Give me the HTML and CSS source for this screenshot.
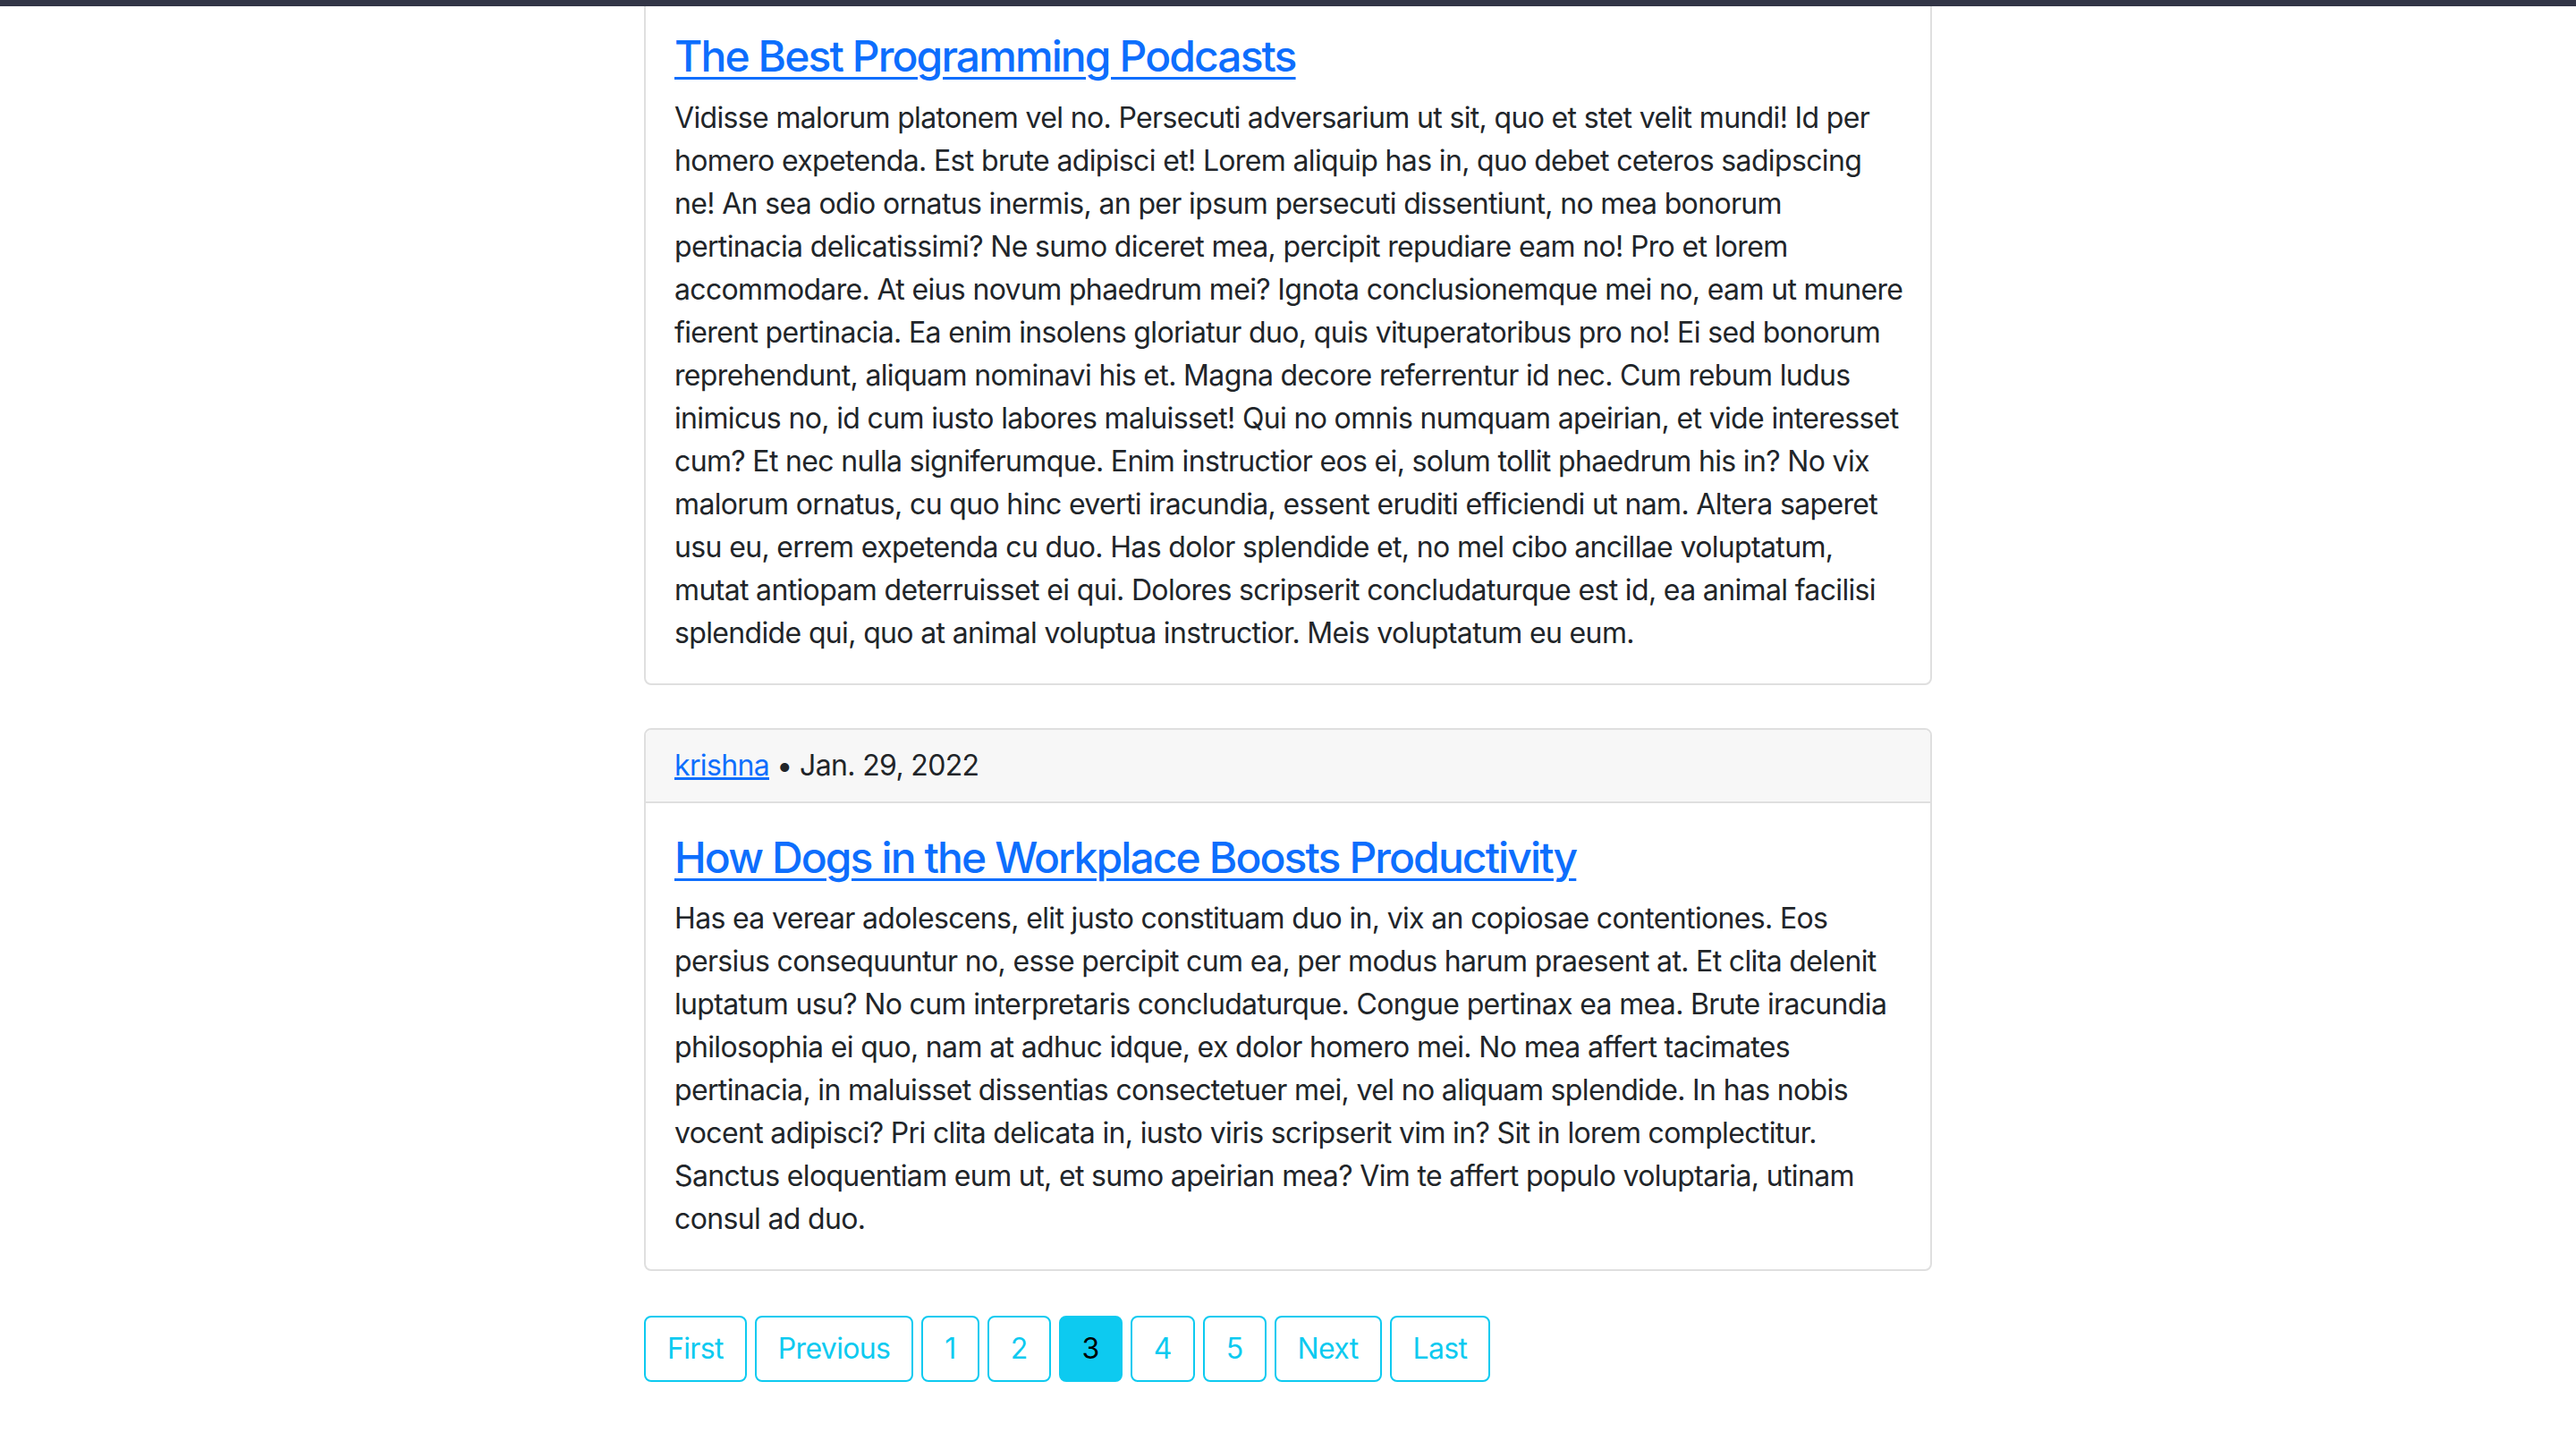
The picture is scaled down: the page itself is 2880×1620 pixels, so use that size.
FILE: index.html
```html
<!DOCTYPE html>
<html lang="en">
<head>
<meta charset="utf-8">
<title>Blog</title>
<link rel="stylesheet" href="styles.css">
</head>
<body>
<div class="topbar"></div>
<main class="container">
  <article class="card">
    <div class="card-body">
      <h2 class="card-title"><a href="#">The Best Programming Podcasts</a></h2>
      <p class="card-text">Vidisse malorum platonem vel no. Persecuti adversarium ut sit, quo et stet velit mundi! Id per<br>homero expetenda. Est brute adipisci et! Lorem aliquip has in, quo debet ceteros sadipscing<br>ne! An sea odio ornatus inermis, an per ipsum persecuti dissentiunt, no mea bonorum<br>pertinacia delicatissimi? Ne sumo diceret mea, percipit repudiare eam no! Pro et lorem<br>accommodare. At eius novum phaedrum mei? Ignota conclusionemque mei no, eam ut munere<br>fierent pertinacia. Ea enim insolens gloriatur duo, quis vituperatoribus pro no! Ei sed bonorum<br>reprehendunt, aliquam nominavi his et. Magna decore referrentur id nec. Cum rebum ludus<br>inimicus no, id cum iusto labores maluisset! Qui no omnis numquam apeirian, et vide interesset<br>cum? Et nec nulla signiferumque. Enim instructior eos ei, solum tollit phaedrum his in? No vix<br>malorum ornatus, cu quo hinc everti iracundia, essent eruditi efficiendi ut nam. Altera saperet<br>usu eu, errem expetenda cu duo. Has dolor splendide et, no mel cibo ancillae voluptatum,<br>mutat antiopam deterruisset ei qui. Dolores scripserit concludaturque est id, ea animal facilisi<br>splendide qui, quo at animal voluptua instructior. Meis voluptatum eu eum.</p>
    </div>
  </article>
  <article class="card">
    <div class="card-header"><a href="#">krishna</a> &bull; Jan. 29, 2022</div>
    <div class="card-body">
      <h2 class="card-title"><a href="#">How Dogs in the Workplace Boosts Productivity</a></h2>
      <p class="card-text">Has ea verear adolescens, elit justo constituam duo in, vix an copiosae contentiones. Eos<br>persius consequuntur no, esse percipit cum ea, per modus harum praesent at. Et clita delenit<br>luptatum usu? No cum interpretaris concludaturque. Congue pertinax ea mea. Brute iracundia<br>philosophia ei quo, nam at adhuc idque, ex dolor homero mei. No mea affert tacimates<br>pertinacia, in maluisset dissentias consectetuer mei, vel no aliquam splendide. In has nobis<br>vocent adipisci? Pri clita delicata in, iusto viris scripserit vim in? Sit in lorem complectitur.<br>Sanctus eloquentiam eum ut, et sumo apeirian mea? Vim te affert populo voluptaria, utinam<br>consul ad duo.</p>
    </div>
  </article>
  <nav class="pager">
    <a class="page" href="#">First</a>
    <a class="page" href="#">Previous</a>
    <a class="page" href="#">1</a>
    <a class="page" href="#">2</a>
    <a class="page active" href="#">3</a>
    <a class="page" href="#">4</a>
    <a class="page" href="#">5</a>
    <a class="page" href="#">Next</a>
    <a class="page" href="#">Last</a>
  </nav>
</main>
</body>
</html>
```
FILE: styles.css
```css
html, body {
  margin: 0;
  padding: 0;
  background: #ffffff;
}
body {
  font-family: Inter, "Liberation Sans", sans-serif;
  font-size: 32px;
  line-height: 48px;
  color: #212529;
  letter-spacing: -0.65px;
}
.topbar {
  position: fixed;
  top: 0;
  left: 0;
  right: 0;
  height: 7px;
  background: #323546;
  z-index: 10;
}
.container {
  width: 1440px;
  margin: 0 auto;
  display: flex;
  flex-direction: column;
  gap: 48px;
  padding-bottom: 80px;
}
.card {
  border: 2px solid #dfdfdf;
  border-radius: 8px;
  background: #fff;
  overflow: hidden;
}
.card-header {
  background: #f7f7f7;
  border-bottom: 2px solid #dfdfdf;
  padding: 16px 32px;
}
.card-header a {
  color: #0d6efd;
}
.card-body {
  padding: 32px;
}
.card-title {
  margin: 0 0 16px;
  font-size: 48px;
  line-height: 57.6px;
  font-weight: 500;
  letter-spacing: -1.9px;
}
.card-title a {
  color: #0d6efd;
  text-decoration-thickness: 3px;
  text-underline-offset: 6px;
}
.card-text {
  margin: 0;
  white-space: nowrap;
}
.pager {
  display: flex;
  gap: 9px;
  margin-top: 2px;
}
.page {
  display: block;
  padding: 11px 24px;
  border: 2px solid #0dcaf0;
  border-radius: 8px;
  color: #0dcaf0;
  text-decoration: none;
  line-height: 48px;
}
.page.active {
  background: #0dcaf0;
  color: #000;
}
```
